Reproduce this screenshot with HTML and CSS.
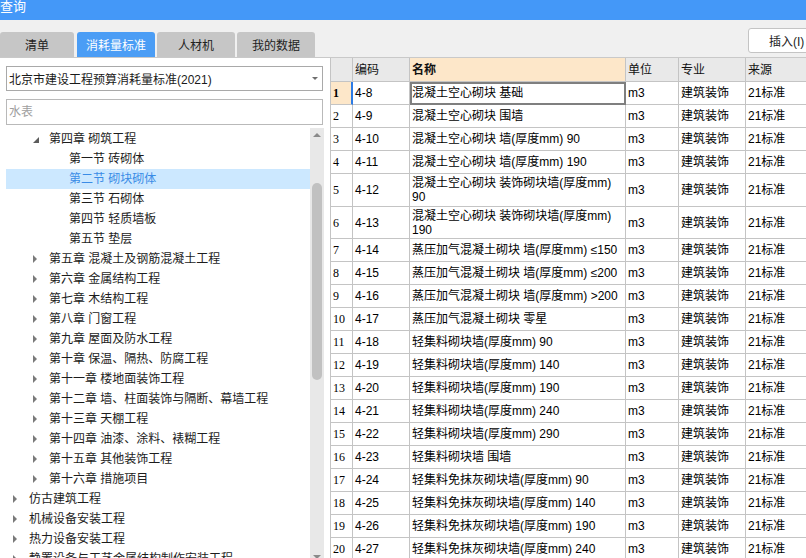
FILE: index.html
```html
<!DOCTYPE html>
<html lang="zh-CN">
<head>
<meta charset="utf-8">
<title>查询</title>
<link rel="stylesheet" href="styles.css">
</head>
<body>
<div class="app">
  <div class="title">查询</div>
  <div class="strip">
    <div class="tabs">
      <div class="tab first">清单</div>
      <div class="tab active">消耗量标准</div>
      <div class="tab">人材机</div>
      <div class="tab">我的数据</div>
    </div>
    <button class="insert">插入(I)</button>
  </div>
  <div class="main">
    <div class="left">
      <div class="select"><span>北京市建设工程预算消耗量标准(2021)</span><i class="caret"></i></div>
      <input class="search" type="text" placeholder="水表">
      <div class="treewrap">
        <div class="tree">
          <div class="node l1 open"><i class="exp"></i>第四章 砌筑工程</div>
          <div class="node l2"><i class="exp none"></i>第一节 砖砌体</div>
          <div class="node l2 sel"><i class="exp none"></i>第二节 砌块砌体</div>
          <div class="node l2"><i class="exp none"></i>第三节 石砌体</div>
          <div class="node l2"><i class="exp none"></i>第四节 轻质墙板</div>
          <div class="node l2"><i class="exp none"></i>第五节 垫层</div>
          <div class="node l1"><i class="exp"></i>第五章 混凝土及钢筋混凝土工程</div>
          <div class="node l1"><i class="exp"></i>第六章 金属结构工程</div>
          <div class="node l1"><i class="exp"></i>第七章 木结构工程</div>
          <div class="node l1"><i class="exp"></i>第八章 门窗工程</div>
          <div class="node l1"><i class="exp"></i>第九章 屋面及防水工程</div>
          <div class="node l1"><i class="exp"></i>第十章 保温、隔热、防腐工程</div>
          <div class="node l1"><i class="exp"></i>第十一章 楼地面装饰工程</div>
          <div class="node l1"><i class="exp"></i>第十二章 墙、柱面装饰与隔断、幕墙工程</div>
          <div class="node l1"><i class="exp"></i>第十三章 天棚工程</div>
          <div class="node l1"><i class="exp"></i>第十四章 油漆、涂料、裱糊工程</div>
          <div class="node l1"><i class="exp"></i>第十五章 其他装饰工程</div>
          <div class="node l1"><i class="exp"></i>第十六章 措施项目</div>
          <div class="node l0"><i class="exp"></i>仿古建筑工程</div>
          <div class="node l0"><i class="exp"></i>机械设备安装工程</div>
          <div class="node l0"><i class="exp"></i>热力设备安装工程</div>
          <div class="node l0"><i class="exp"></i>静置设备与工艺金属结构制作安装工程</div>
        </div>
        <div class="vscroll">
          <div class="arrow up"></div>
          <div class="thumb"></div>
          <div class="arrow down"></div>
        </div>
      </div>
    </div>
    <div class="grid">
      <div class="row head">
        <div class="c num"></div>
        <div class="c">编码</div>
        <div class="c name-h">名称</div>
        <div class="c">单位</div>
        <div class="c">专业</div>
        <div class="c">来源</div>
      </div>
      <div class="row cur">
        <div class="c num">1</div>
        <div class="c">4-8</div>
        <div class="c nm">混凝土空心砌块 基础</div>
        <div class="c">m3</div>
        <div class="c">建筑装饰</div>
        <div class="c">21标准</div>
      </div>
      <div class="row">
        <div class="c num">2</div><div class="c">4-9</div><div class="c nm">混凝土空心砌块 围墙</div><div class="c">m3</div><div class="c">建筑装饰</div><div class="c">21标准</div>
      </div>
      <div class="row">
        <div class="c num">3</div><div class="c">4-10</div><div class="c nm">混凝土空心砌块 墙(厚度mm) 90</div><div class="c">m3</div><div class="c">建筑装饰</div><div class="c">21标准</div>
      </div>
      <div class="row">
        <div class="c num">4</div><div class="c">4-11</div><div class="c nm">混凝土空心砌块 墙(厚度mm) 190</div><div class="c">m3</div><div class="c">建筑装饰</div><div class="c">21标准</div>
      </div>
      <div class="row tall33">
        <div class="c num">5</div><div class="c">4-12</div><div class="c nm wrap">混凝土空心砌块 装饰砌块墙(厚度mm)<br>90</div><div class="c">m3</div><div class="c">建筑装饰</div><div class="c">21标准</div>
      </div>
      <div class="row tall32">
        <div class="c num">6</div><div class="c">4-13</div><div class="c nm wrap">混凝土空心砌块 装饰砌块墙(厚度mm)<br>190</div><div class="c">m3</div><div class="c">建筑装饰</div><div class="c">21标准</div>
      </div>
      <div class="row">
        <div class="c num">7</div><div class="c">4-14</div><div class="c nm">蒸压加气混凝土砌块 墙(厚度mm) ≤150</div><div class="c">m3</div><div class="c">建筑装饰</div><div class="c">21标准</div>
      </div>
      <div class="row">
        <div class="c num">8</div><div class="c">4-15</div><div class="c nm">蒸压加气混凝土砌块 墙(厚度mm) ≤200</div><div class="c">m3</div><div class="c">建筑装饰</div><div class="c">21标准</div>
      </div>
      <div class="row">
        <div class="c num">9</div><div class="c">4-16</div><div class="c nm">蒸压加气混凝土砌块 墙(厚度mm) &gt;200</div><div class="c">m3</div><div class="c">建筑装饰</div><div class="c">21标准</div>
      </div>
      <div class="row">
        <div class="c num">10</div><div class="c">4-17</div><div class="c nm">蒸压加气混凝土砌块 零星</div><div class="c">m3</div><div class="c">建筑装饰</div><div class="c">21标准</div>
      </div>
      <div class="row">
        <div class="c num">11</div><div class="c">4-18</div><div class="c nm">轻集料砌块墙(厚度mm) 90</div><div class="c">m3</div><div class="c">建筑装饰</div><div class="c">21标准</div>
      </div>
      <div class="row">
        <div class="c num">12</div><div class="c">4-19</div><div class="c nm">轻集料砌块墙(厚度mm) 140</div><div class="c">m3</div><div class="c">建筑装饰</div><div class="c">21标准</div>
      </div>
      <div class="row">
        <div class="c num">13</div><div class="c">4-20</div><div class="c nm">轻集料砌块墙(厚度mm) 190</div><div class="c">m3</div><div class="c">建筑装饰</div><div class="c">21标准</div>
      </div>
      <div class="row">
        <div class="c num">14</div><div class="c">4-21</div><div class="c nm">轻集料砌块墙(厚度mm) 240</div><div class="c">m3</div><div class="c">建筑装饰</div><div class="c">21标准</div>
      </div>
      <div class="row">
        <div class="c num">15</div><div class="c">4-22</div><div class="c nm">轻集料砌块墙(厚度mm) 290</div><div class="c">m3</div><div class="c">建筑装饰</div><div class="c">21标准</div>
      </div>
      <div class="row">
        <div class="c num">16</div><div class="c">4-23</div><div class="c nm">轻集料砌块墙 围墙</div><div class="c">m3</div><div class="c">建筑装饰</div><div class="c">21标准</div>
      </div>
      <div class="row">
        <div class="c num">17</div><div class="c">4-24</div><div class="c nm">轻集料免抹灰砌块墙(厚度mm) 90</div><div class="c">m3</div><div class="c">建筑装饰</div><div class="c">21标准</div>
      </div>
      <div class="row">
        <div class="c num">18</div><div class="c">4-25</div><div class="c nm">轻集料免抹灰砌块墙(厚度mm) 140</div><div class="c">m3</div><div class="c">建筑装饰</div><div class="c">21标准</div>
      </div>
      <div class="row">
        <div class="c num">19</div><div class="c">4-26</div><div class="c nm">轻集料免抹灰砌块墙(厚度mm) 190</div><div class="c">m3</div><div class="c">建筑装饰</div><div class="c">21标准</div>
      </div>
      <div class="row">
        <div class="c num">20</div><div class="c">4-27</div><div class="c nm">轻集料免抹灰砌块墙(厚度mm) 240</div><div class="c">m3</div><div class="c">建筑装饰</div><div class="c">21标准</div>
      </div>
    </div>
  </div>
</div>
</body>
</html>
```
FILE: styles.css
```css
* { box-sizing: border-box; }
html, body {
  margin: 0;
  padding: 0;
  width: 806px;
  height: 558px;
  overflow: hidden;
  background: #f0f0f0;
  font-family: "Liberation Sans", "Noto Sans CJK SC", sans-serif;
  font-size: 12px;
  color: #1e1e1e;
}
.app {
  width: 806px;
  height: 558px;
  display: flex;
  flex-direction: column;
  overflow: hidden;
}
.title {
  height: 20px;
  flex: none;
  background: #4498f8;
  color: #fff;
  font-size: 13px;
  line-height: 13px;
  padding-left: 0;
}
.strip {
  flex: none;
  height: 38px;
  display: flex;
  justify-content: space-between;
  align-items: flex-start;
  border-bottom: 1px solid #c9c9c9;
  background: #f0f0f0;
}
.tabs {
  display: flex;
  gap: 2px;
  margin-top: 12px;
}
.tab {
  width: 78px;
  height: 25px;
  background: #c6c6c6;
  color: #222;
  border-radius: 3px 3px 0 0;
  display: flex;
  align-items: center;
  justify-content: center;
  font-size: 12px;
}
.tab.first { width: 74px; margin-right: 1px; }
.tab.active { background: #4b9df5; color: #fff; }
.insert {
  margin-top: 8px;
  margin-right: -14px;
  width: 72px;
  height: 25px;
  background: #fff;
  border: 1px solid #c4c4c4;
  border-radius: 3px;
  font-family: inherit;
  font-size: 12px;
  color: #222;
  text-align: left;
  padding: 0 0 0 20px;
}
.main {
  flex: 1;
  display: flex;
  min-height: 0;
  overflow: hidden;
}
.left {
  width: 330px;
  flex: none;
  background: #fff;
  display: flex;
  flex-direction: column;
  overflow: hidden;
}
.select {
  flex: none;
  margin: 8px 7px 0 6px;
  height: 25px;
  border: 1px solid #a9a9a9;
  display: flex;
  align-items: center;
  justify-content: space-between;
  padding: 0 4px 0 2px;
  color: #1a1a1a;
}
.caret {
  width: 0;
  height: 0;
  border-left: 3px solid transparent;
  border-right: 3px solid transparent;
  border-top: 3px solid #6e6e6e;
}
.search {
  flex: none;
  display: block;
  margin: 8px 7px 0 6px;
  height: 26px;
  width: 317px;
  border: 1px solid #b9b9b9;
  padding: 0 2px;
  font-family: inherit;
  font-size: 12px;
  outline: none;
  background: #fff;
}
.search::placeholder { color: #a0a0a0; }
.treewrap {
  flex: none;
  margin-top: 3px;
  display: flex;
  padding: 0 6px;
}
.tree { flex: 1; padding-top: 1px; }
.node {
  height: 20px;
  line-height: 20px;
  display: flex;
  align-items: center;
  white-space: nowrap;
  color: #1c1c1c;
}
.node.l0 { padding-left: 7px; }
.node.l1 { padding-left: 27px; }
.node.l2 { padding-left: 47px; }
.node.sel { background: #cce8ff; color: #3a8ce6; }
.exp {
  width: 16px;
  height: 20px;
  flex: none;
  display: flex;
  align-items: center;
}
.exp::before {
  content: "";
  display: block;
  width: 0;
  height: 0;
  border-left: 4px solid #7a7a7a;
  border-top: 4px solid transparent;
  border-bottom: 4px solid transparent;
}
.exp.none::before { display: none; }
.open .exp::before {
  border-top: 0;
  border-left: 6px solid transparent;
  border-bottom: 6px solid #5c5c5c;
  margin-top: 2px;
}
.vscroll {
  width: 14px;
  flex: none;
  background: #e8e8e8;
  display: flex;
  flex-direction: column;
  align-items: center;
}
.arrow {
  height: 14px;
  width: 14px;
  flex: none;
  display: flex;
  align-items: center;
  justify-content: center;
}
.arrow::before {
  content: "";
  width: 0;
  height: 0;
  border-left: 4px solid transparent;
  border-right: 4px solid transparent;
}
.arrow.up::before { border-bottom: 4px solid #8a8a8a; }
.arrow.down { margin-top: auto; margin-bottom: 5px; }
.arrow.down::before { border-top: 4px solid #8a8a8a; }
.thumb {
  width: 10px;
  height: 197px;
  margin-top: 41px;
  border-radius: 5px;
  background: #c1c1c1;
  flex: none;
}
.grid {
  flex: 1;
  min-width: 0;
  background: #fff;
  border-left: 1px solid #c4c4c4;
  overflow: hidden;
}
.row {
  display: grid;
  grid-template-columns: 22px 57px 216px 53px 67px 140px;
  height: 23px;
}
.row.head { height: 24px; }
.row.tall33 { height: 33px; }
.row.tall32 { height: 32px; }
.c {
  border-right: 1px solid #c4c4c4;
  border-bottom: 1px solid #c4c4c4;
  display: flex;
  align-items: center;
  padding: 0 2px;
  white-space: nowrap;
  overflow: hidden;
  color: #000;
  font-size: 12px;
  line-height: 14px;
}
.c.wrap { white-space: normal; }
.head .c { background: #e9e9e9; font-size: 12px; color: #111; padding-top: 1px; }
.head .c.name-h { background: #fde7c9; font-weight: bold; }
.c.num { font-family: "Liberation Serif", "Noto Sans CJK SC", serif; font-size: 12px; padding-left: 2px; }
.cur .c.num { background: #fde7c9; font-weight: bold; border-right: 2px solid #2c7be5; }
.cur .c.nm { outline: 2px solid #7f7f7f; outline-offset: -2px; }
```
